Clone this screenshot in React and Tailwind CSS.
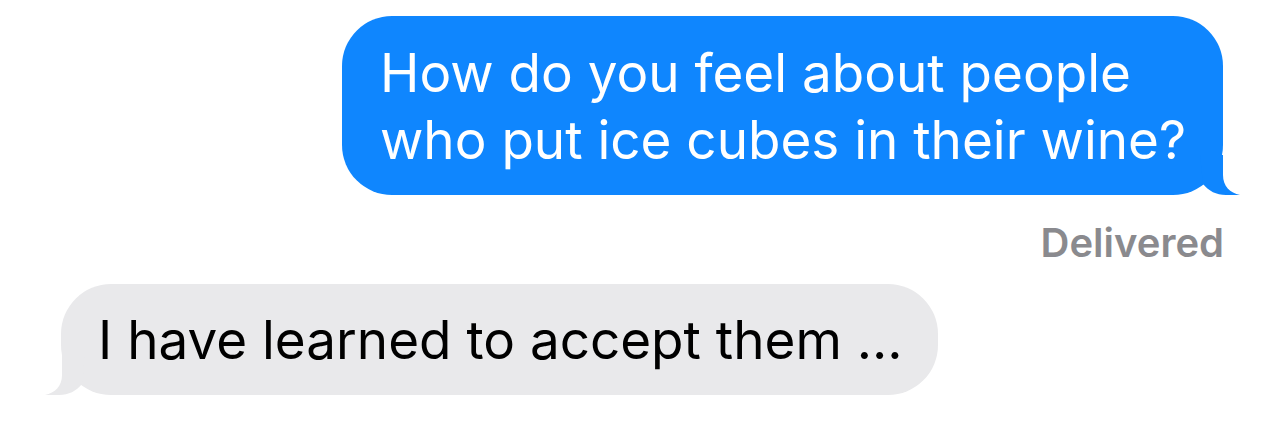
import React from "react";

const font = { fontFamily: "Inter, 'Helvetica Neue', Arial, sans-serif" };

/* ---------- BUBBLE TAILS ---------- */
function TailRight({ color }) {
  return (
    <svg
      className="absolute -right-[17px] bottom-0"
      width="40"
      height="40"
      viewBox="0 0 40 40"
    >
      <path
        d="M0 0 L23 0 L23 20 C23 31 30 38 40 40 L26 40 C16 40 9 36 3 29 Z"
        fill={color}
      />
    </svg>
  );
}

function TailLeft({ color }) {
  return (
    <svg
      className="absolute -left-[16px] bottom-0"
      width="40"
      height="40"
      viewBox="0 0 40 40"
    >
      <path
        d="M40 0 L17 0 L17 20 C17 31 10 38 0 40 L14 40 C24 40 31 36 37 29 Z"
        fill={color}
      />
    </svg>
  );
}

export default function App() {
  return (
    <div className="w-[1284px] h-[423px] bg-white flex flex-col pt-4" style={font}>
      {/* SENT */}
      <div className="flex justify-end pr-[61px]">
        <div className="relative w-[881px] bg-[#0f86fe] rounded-[50px] pl-[38px] pt-[24px] pb-[21px] text-white text-[53px] leading-[67px]">
          How do you feel about people
          <br />
          who put ice cubes in their wine?
          <TailRight color="#0f86fe" />
        </div>
      </div>

      {/* STATUS */}
      <div className="flex justify-end pr-[60px] mt-[25px]">
        <span className="text-[40px] leading-[46px] font-semibold text-[#8a8a8e]">
          Delivered
        </span>
      </div>

      {/* RECEIVED */}
      <div className="flex justify-start pl-[61px] mt-[18px]">
        <div className="relative w-[877px] bg-[#e9e9eb] rounded-[50px] pl-[37px] pt-[23px] pb-[21px] text-black text-[53px] leading-[67px]">
          I have learned to accept them ...
          <TailLeft color="#e9e9eb" />
        </div>
      </div>
    </div>
  );
}
